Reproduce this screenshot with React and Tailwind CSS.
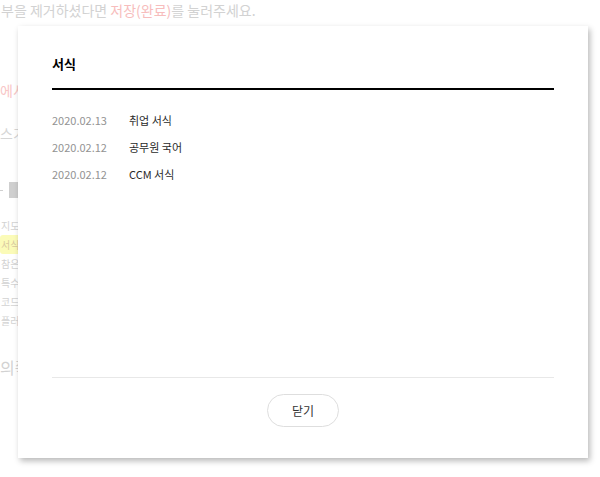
const rows = [
  { date: '2020.02.13', title: '취업 서식' },
  { date: '2020.02.12', title: '공무원 국어' },
  { date: '2020.02.12', title: 'CCM 서식' },
];

const sideItems = ['지도', '서식', '참은글', '특수문', '코드블', '플러그'];

export default function App() {
  return (
    <div className="relative w-[600px] h-[477px] overflow-hidden bg-white font-['Noto_Sans_CJK_KR','Noto_Sans',sans-serif]">
      {/* faded page behind the modal */}
      <div className="flex flex-col">
        <p className="pt-[1px] pl-[1px] text-[14px] leading-[18px] text-[#d2d2d2] whitespace-nowrap">
          부을 제거하셨다면 <span className="text-[#f7bdbd]">저장(완료)</span>를 눌러주세요.
        </p>
        <p className="mt-[62px] text-[14px] leading-[18px] text-[#f8c6c6] whitespace-nowrap">에서 설정</p>
        <p className="mt-[25px] text-[14px] leading-[18px] text-[#d6d6d6] whitespace-nowrap">스기 설정</p>
        <div className="mt-[40px] flex items-center gap-[6px] h-[16px]">
          <span className="w-[3px] h-px bg-[#d0d0d0]" />
          <span className="w-[12px] h-[16px] bg-[#cfcfcf]" />
        </div>
        <div className="mt-[18px] flex flex-col">
          {sideItems.map((s, i) => (
            <span
              key={i}
              className={`text-[10px] leading-[19px] h-[19px] pl-[1px] whitespace-nowrap w-[60px] ${
                i === 1 ? 'bg-[#fbfbb8] text-[#d9c9a0] rounded-[3px]' : 'text-[#d2d2d2]'
              }`}
            >
              {s}
            </span>
          ))}
        </div>
        <p className="mt-[27px] text-[16px] leading-[20px] text-[#d2d2d2] whitespace-nowrap">의쪽 설정</p>
      </div>

      {/* modal */}
      <div className="absolute left-[18px] top-[26px] w-[570px] h-[432px] bg-white shadow-[2px_3px_6px_rgba(0,0,0,0.28)] flex flex-col px-[34px]">
        <div className="pt-[28px] pb-[14px] border-b-2 border-black">
          <h2 className="text-[13px] leading-[20px] font-bold text-black">서식</h2>
        </div>
        <ul className="mt-[17px] flex flex-col">
          {rows.map((r, i) => (
            <li key={i} className="flex items-center h-[27px] text-[11px]">
              <span className="w-[77px] text-[#939393]">{r.date}</span>
              <span className="text-[#2a2a2a]">{r.title}</span>
            </li>
          ))}
        </ul>
        <div className="flex-1" />
        <div className="border-t border-[#e8e8e8] pt-[16px] pb-[31px] flex justify-center">
          <button className="w-[72px] h-[33px] rounded-full border border-[#dedede] bg-white text-[12px] text-[#333]">
            닫기
          </button>
        </div>
      </div>
    </div>
  );
}
